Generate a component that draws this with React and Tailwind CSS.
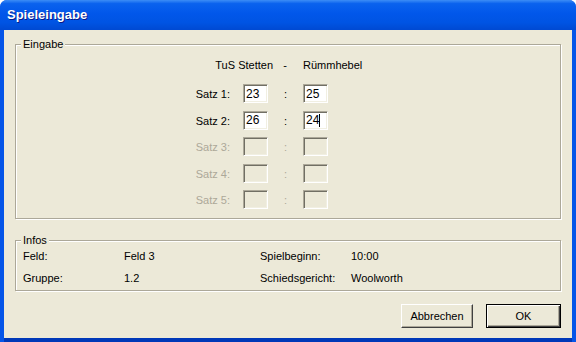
import React from "react";

const sets = [
  { label: "Satz 1:", a: "23", b: "25", enabled: true },
  { label: "Satz 2:", a: "26", b: "24", enabled: true, cursor: true },
  { label: "Satz 3:", a: "", b: "", enabled: false },
  { label: "Satz 4:", a: "", b: "", enabled: false },
  { label: "Satz 5:", a: "", b: "", enabled: false },
];

const ScoreBox = ({ value, enabled, cursor }) => (
  <div
    className={`w-[25px] h-[19px] flex items-center pl-[2px] text-[12px] leading-none border border-t-[#ACA899] border-l-[#ACA899] border-b-white border-r-white shadow-[inset_1px_1px_0_#716F64,inset_-1px_-1px_0_#F1EFE2] ${
      enabled ? "bg-white" : "bg-[#ECE9D8]"
    }`}
  >
    {value}
    {cursor && <span className="w-[1px] h-[13px] bg-black" />}
  </div>
);

const GroupBox = ({ title, className, children }) => (
  <fieldset
    className={`border border-[#ACA899] shadow-[inset_1px_1px_0_#fff,1px_1px_0_#fff] px-0 ${className}`}
  >
    <legend className="ml-[5px] px-[2px] bg-[#ECE9D8] leading-[13px]">{title}</legend>
    {children}
  </fieldset>
);

export default function App() {
  return (
    <div
      className="w-[576px] h-[342px] flex flex-col rounded-t-[7px] overflow-hidden bg-[#0555E8] text-[11px] text-black"
      style={{ fontFamily: '"Liberation Sans", Arial, sans-serif' }}
    >
      {/* title bar */}
      <div className="h-[30px] shrink-0 flex items-center pl-[7px] bg-[linear-gradient(to_bottom,#3C8DF6_0%,#0A62EE_12%,#0157EA_45%,#0054E3_75%,#0049D2_100%)]">
        <span className="text-white font-bold text-[13px] [text-shadow:1px_1px_0_#0A1A88]">
          Spieleingabe
        </span>
      </div>

      {/* client area */}
      <div className="flex-1 mx-[4px] mb-[4px] bg-[#ECE9D8] px-[11px] pt-[8px] flex flex-col shadow-[0_4px_0_#0038B8]">
        <GroupBox title="Eingabe" className="h-[181px]">
          <div className="pl-[154px] pt-[8px] flex flex-col">
            <div className="flex leading-[13px]">
              <span className="w-[103px] text-right">TuS Stetten</span>
              <span className="w-[24px] text-center">-</span>
              <span className="ml-[6px]">Rümmhebel</span>
            </div>
            <div className="mt-[12px] flex flex-col gap-[7.5px]">
              {sets.map((s) => (
                <div
                  key={s.label}
                  className={`flex items-center h-[19px] ${s.enabled ? "text-black" : "text-[#ACA899]"}`}
                >
                  <span className="w-[60px] text-right pt-[2px]">{s.label}</span>
                  <span className="w-[13px]" />
                  <ScoreBox value={s.a} enabled={s.enabled} />
                  <span className="w-[35px] text-center pt-[2px]">:</span>
                  <ScoreBox value={s.b} enabled={s.enabled} cursor={s.cursor} />
                </div>
              ))}
            </div>
          </div>
        </GroupBox>

        <GroupBox title="Infos" className="mt-[15px] h-[57px]">
          <div className="pl-[7px] pt-[3px] grid grid-cols-[101px_136px_91px_1fr] gap-y-[9px] leading-[13px]">
            <span>Feld:</span>
            <span>Feld 3</span>
            <span>Spielbeginn:</span>
            <span>10:00</span>
            <span>Gruppe:</span>
            <span>1.2</span>
            <span>Schiedsgericht:</span>
            <span>Woolworth</span>
          </div>
        </GroupBox>

        <div className="mt-[13px] flex justify-end gap-[13px]">
          <button className="w-[72px] h-[24px] bg-[#ECE9D8] border border-white border-r-[#404040] border-b-[#404040] shadow-[inset_-1px_-1px_0_#ACA899]">
            Abbrechen
          </button>
          <button className="w-[75px] h-[24px] bg-[#ECE9D8] border border-black shadow-[inset_1px_1px_0_#fff,inset_-1px_-1px_0_#404040,inset_-2px_-2px_0_#ACA899]">
            OK
          </button>
        </div>
      </div>
    </div>
  );
}
